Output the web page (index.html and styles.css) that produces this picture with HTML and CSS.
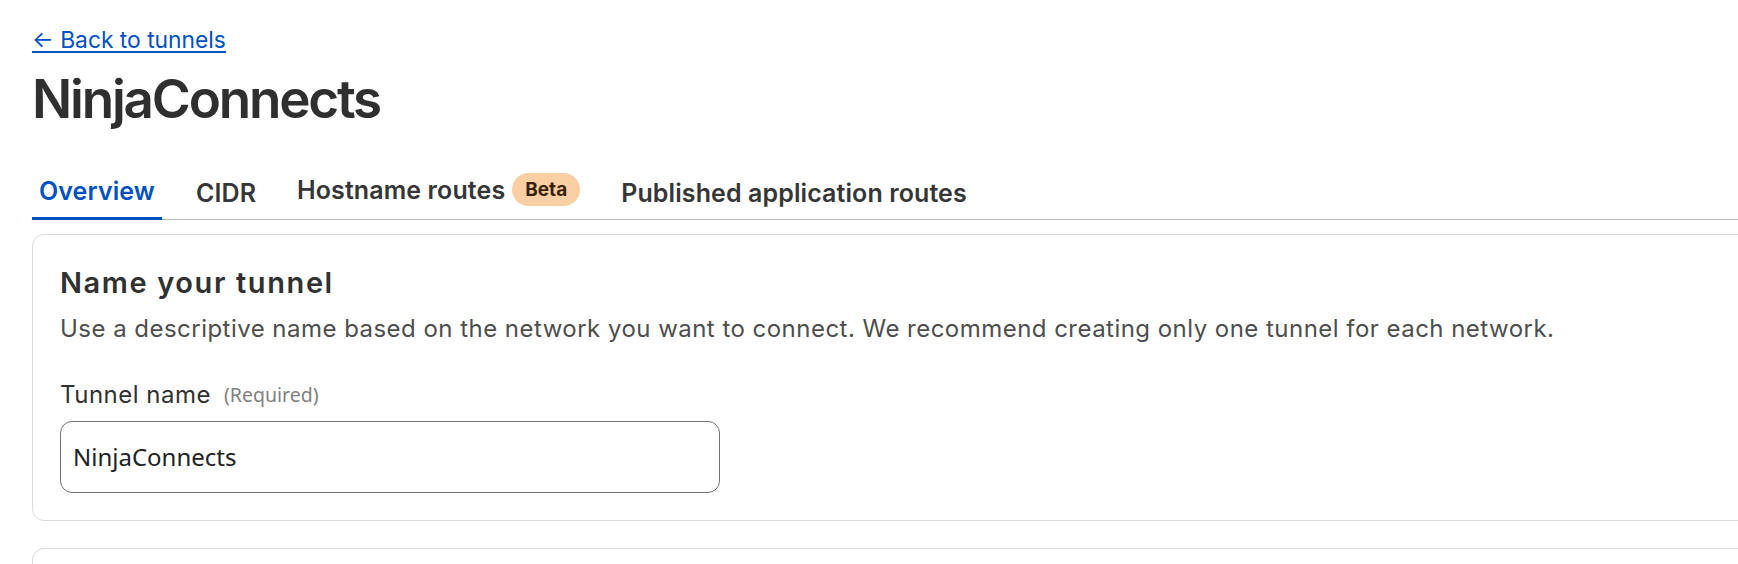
FILE: index.html
```html
<!DOCTYPE html>
<html lang="en">
<head>
<meta charset="utf-8">
<title>NinjaConnects</title>
<link rel="stylesheet" href="styles.css">
</head>
<body>
<main class="page">
  <a class="back-link" href="#">← Back to tunnels</a>
  <h1 class="title">NinjaConnects</h1>
  <nav class="tabs">
    <a class="tab tab-active" href="#">Overview</a>
    <a class="tab" href="#">CIDR</a>
    <a class="tab tab-badge" href="#"><span>Hostname routes</span><span class="badge">Beta</span></a>
    <a class="tab" href="#">Published application routes</a>
  </nav>
  <section class="card">
    <h2 class="card-title">Name your tunnel</h2>
    <p class="card-desc">Use a descriptive name based on the network you want to connect. We recommend creating only one tunnel for each network.</p>
    <label class="field-label" for="tunnel-name"><span>Tunnel name</span><span class="required">(Required)</span></label>
    <input class="text-input" id="tunnel-name" type="text" value="NinjaConnects">
  </section>
  <section class="card card-next"></section>
</main>
</body>
</html>
```

FILE: styles.css
```css
html, body {
  margin: 0;
  padding: 0;
  background: #ffffff;
  overflow: hidden;
}

body {
  font-family: Inter, "Liberation Sans", sans-serif;
  color: #313131;
}

.page {
  width: 1760px;
  padding: 22px 0 0 32px;
  display: flex;
  flex-direction: column;
  align-items: flex-start;
}

.back-link {
  font-size: 22.8px;
  line-height: 36px;
  color: #0051c3;
  text-decoration: underline;
  text-decoration-thickness: 2px;
  text-underline-offset: 3px;
}

.title {
  margin: 9px 0 0;
  font-size: 53px;
  line-height: 64.8px;
  font-weight: 600;
  color: #2f2f2f;
  letter-spacing: -2.2px;
}

.tabs {
  align-self: stretch;
  margin-top: 40px;
  display: flex;
  align-items: flex-end;
  gap: 27px;
  border-bottom: 1px solid #b6b6b6;
}

.tab {
  display: inline-flex;
  align-items: center;
  margin-bottom: -1px;
  padding: 0 7px 8px;
  font-size: 25px;
  line-height: 36px;
  font-weight: 600;
  letter-spacing: 0.1px;
  color: #363636;
  text-decoration: none;
  border-bottom: 1px solid transparent;
}

.tab-active {
  color: #0051c3;
  border-bottom: 3px solid #0051c3;
}

.tab-badge {
  padding-bottom: 11px;
}

.badge {
  display: inline-flex;
  align-items: center;
  height: 33px;
  margin-left: 7px;
  padding: 0 13px;
  border-radius: 17px;
  background: #fbcfa4;
  color: #3c1f08;
  font-size: 19px;
  font-weight: 700;
  letter-spacing: 0;
}

.card {
  align-self: stretch;
  margin-top: 14px;
  padding: 27px;
  border: 1px solid #dadada;
  border-radius: 12px;
  display: flex;
  flex-direction: column;
  align-items: flex-start;
}

.card-title {
  margin: 0;
  font-size: 29px;
  line-height: 42px;
  font-weight: 600;
  letter-spacing: 1.6px;
  color: #313131;
}

.card-desc {
  margin: 7px 0 0;
  font-size: 24px;
  line-height: 36px;
  letter-spacing: 0.47px;
  color: #4e4e4e;
}

.field-label {
  margin-top: 30px;
  display: flex;
  align-items: center;
  gap: 13px;
  font-size: 24px;
  line-height: 36px;
  letter-spacing: 0.5px;
  color: #313131;
}

.required {
  font-family: "Noto Sans", "Open Sans", sans-serif;
  font-size: 19.5px;
  line-height: 27px;
  letter-spacing: 0;
  color: #808080;
}

.text-input {
  box-sizing: border-box;
  margin-top: 8px;
  width: 660px;
  height: 72px;
  padding: 0 12px;
  border: 1px solid #747474;
  border-radius: 12px;
  font-family: "Noto Sans", "Open Sans", sans-serif;
  font-size: 24px;
  color: #222222;
  background: #ffffff;
  outline: none;
}

.card-next {
  margin-top: 27px;
  height: 200px;
  padding: 0;
}
```
